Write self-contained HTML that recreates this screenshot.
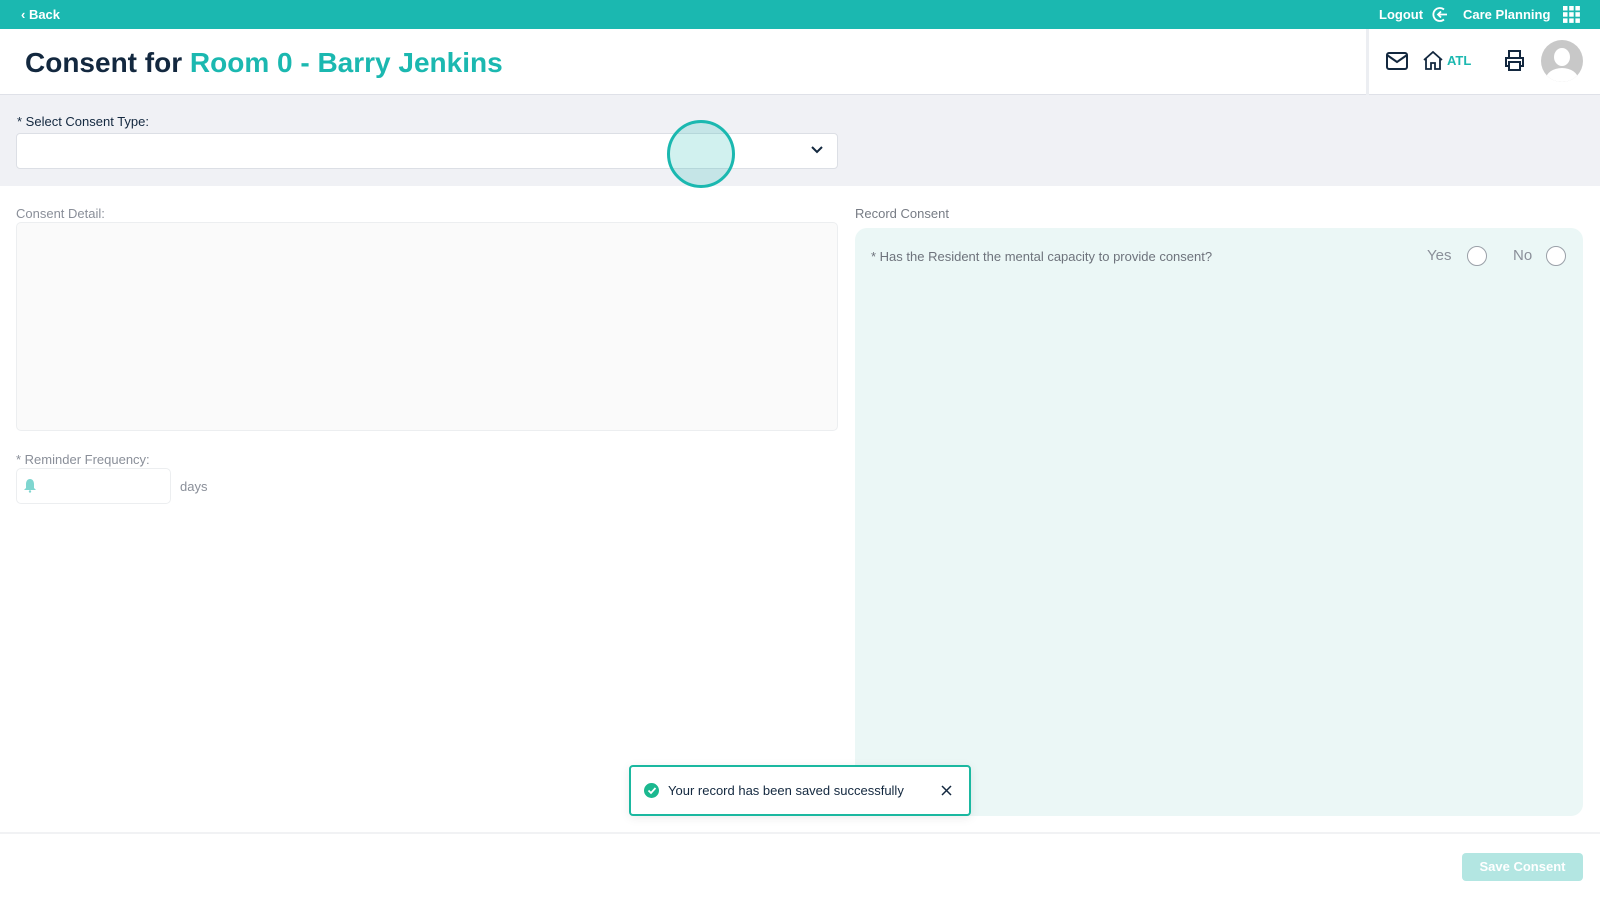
<!DOCTYPE html>
<html><head><meta charset="utf-8"><style>
*{box-sizing:border-box;margin:0;padding:0}
body{width:1600px;height:900px;background:#fff;font-family:"Liberation Sans",sans-serif;position:relative;overflow:hidden}
.abs{position:absolute}
.top{left:0;top:0;width:1600px;height:29px;background:#1bb8b0;color:#fff;font-size:13px;font-weight:bold}
.hdr{left:0;top:29px;width:1600px;height:66px;background:#fff;border-bottom:1px solid #dfe1e8}
.grey{left:0;top:95px;width:1600px;height:91px;background:#f0f1f5}
.lbl{font-size:13px;color:#8a8f99}
</style></head><body>
<div class="abs top">
 <div class="abs" style="left:21px;top:7px">‹ Back</div>
 <div class="abs" style="left:1379px;top:7px">Logout</div>
 <svg class="abs" style="left:1432px;top:6px" width="17" height="17" viewBox="0 0 17 17" fill="none" stroke="#fff" stroke-width="1.8"><path d="M12 3.5A6.5 6.5 0 1 0 12 13.5"/><path d="M15 8.5H6M9 5.5L6 8.5 9 11.5"/></svg>
 <div class="abs" style="left:1463px;top:7px">Care Planning</div>
 <svg class="abs" style="left:1563px;top:6px" width="17" height="17" viewBox="0 0 17 17" fill="#fff"><rect x="0" y="0" width="4.5" height="4.5"/><rect x="6.2" y="0" width="4.5" height="4.5"/><rect x="12.4" y="0" width="4.5" height="4.5"/><rect x="0" y="6.2" width="4.5" height="4.5"/><rect x="6.2" y="6.2" width="4.5" height="4.5"/><rect x="12.4" y="6.2" width="4.5" height="4.5"/><rect x="0" y="12.4" width="4.5" height="4.5"/><rect x="6.2" y="12.4" width="4.5" height="4.5"/><rect x="12.4" y="12.4" width="4.5" height="4.5"/></svg>
</div>
<div class="abs hdr">
 <div class="abs" style="left:25px;top:18px;font-size:28px;font-weight:bold;color:#13283f;white-space:nowrap">Consent for <span style="color:#1bb8b0">Room 0 - Barry Jenkins</span></div>
 <div class="abs" style="left:1366px;top:0;width:3px;height:66px;background:#eceef2"></div>
 <svg class="abs" style="left:1386px;top:23px" width="22" height="18" viewBox="0 0 22 18" fill="none" stroke="#13283f" stroke-width="2"><rect x="1" y="1" width="20" height="16" rx="2"/><path d="M1 3l10 7 10-7"/></svg>
 <svg class="abs" style="left:1423px;top:22px" width="20" height="19" viewBox="0 0 20 19" fill="none" stroke="#13283f" stroke-width="1.8"><path d="M1 9L10 1l9 8M3 7v11h5v-6h4v6h5V7"/></svg>
 <div class="abs" style="left:1447px;top:24px;font-size:13px;font-weight:bold;color:#1bb8b0">ATL</div>
 <svg class="abs" style="left:1504px;top:21px" width="21" height="21" viewBox="0 0 21 21" fill="none" stroke="#13283f" stroke-width="2"><path d="M5 7V1h11v6M5 16H2V8h17v8h-3"/><rect x="5" y="12" width="11" height="8"/></svg>
 <div class="abs" style="left:1541px;top:11px;width:42px;height:42px;border-radius:50%;background:#c8c8c8;overflow:hidden">
  <div class="abs" style="left:13px;top:8px;width:16px;height:18px;border-radius:50%;background:#fff"></div>
  <div class="abs" style="left:5px;top:28px;width:32px;height:22px;border-radius:50%;background:#fff"></div>
 </div>
</div>
<div class="abs grey">
 <div class="abs" style="left:17px;top:19px;font-size:13px;color:#13283f">* Select Consent Type:</div>
 <div class="abs" style="left:16px;top:38px;width:822px;height:36px;background:#fff;border:1px solid #dcdfe5;border-radius:4px"></div>
 <svg class="abs" style="left:811px;top:51px" width="12" height="8" viewBox="0 0 12 8" fill="none" stroke="#13283f" stroke-width="2"><path d="M1 1l5 5 5-5"/></svg>
</div>
<div class="abs" style="left:667px;top:120px;width:68px;height:68px;border-radius:50%;background:rgba(27,184,176,.2);border:3px solid #1bb8b0"></div>
<div class="abs lbl" style="left:16px;top:206px">Consent Detail:</div>
<div class="abs" style="left:16px;top:222px;width:822px;height:209px;background:#fafafa;border:1px solid #eceef0;border-radius:5px"></div>
<div class="abs lbl" style="left:16px;top:452px">* Reminder Frequency:</div>
<div class="abs" style="left:16px;top:468px;width:155px;height:36px;border:1px solid #eceef0;border-radius:5px"></div>
<svg class="abs" style="left:24px;top:479px" width="12" height="14" viewBox="0 0 12 14" fill="#7fd6d0"><path d="M6 0C3 0 2 3 2 5v4L0 11h12l-2-2V5C10 3 9 0 6 0z"/><circle cx="6" cy="12.5" r="1.2"/></svg>
<div class="abs lbl" style="left:180px;top:479px">days</div>
<div class="abs lbl" style="left:855px;top:206px;color:#777c85">Record Consent</div>
<div class="abs" style="left:855px;top:228px;width:728px;height:588px;background:#ebf7f6;border-radius:12px"></div>
<div class="abs lbl" style="left:871px;top:249px;color:#6e737c">* Has the Resident the mental capacity to provide consent?</div>
<div class="abs" style="left:1427px;top:247px;font-size:15px;color:#8a8f99">Yes</div>
<div class="abs" style="left:1467px;top:246px;width:20px;height:20px;border-radius:50%;border:1.5px solid #9aa0a8;background:#fff"></div>
<div class="abs" style="left:1513px;top:247px;font-size:15px;color:#8a8f99">No</div>
<div class="abs" style="left:1546px;top:246px;width:20px;height:20px;border-radius:50%;border:1.5px solid #9aa0a8;background:#fff"></div>
<div class="abs" style="left:0;top:832px;width:1600px;height:2px;background:#f1f2f4"></div>
<div class="abs" style="left:629px;top:765px;width:342px;height:51px;background:#fff;border:2px solid #1bb8a0;border-radius:4px;box-shadow:0 2px 10px rgba(0,0,0,.08)">
 <div class="abs" style="left:13px;top:16px;width:15px;height:15px;border-radius:50%;background:#1bb88f"></div>
 <svg class="abs" style="left:16px;top:19px" width="10" height="9" viewBox="0 0 10 9" fill="none" stroke="#fff" stroke-width="1.8"><path d="M1.5 4.5l2.5 2.5 4.5-5"/></svg>
 <div class="abs" style="left:37px;top:16px;font-size:13px;color:#13283f;white-space:nowrap">Your record has been saved successfully</div>
 <svg class="abs" style="left:310px;top:18px" width="11" height="11" viewBox="0 0 11 11" stroke="#13283f" stroke-width="1.5"><path d="M1 1l9 9M10 1l-9 9"/></svg>
</div>
<div class="abs" style="left:1462px;top:853px;width:121px;height:28px;background:#b3e6e2;border-radius:4px;color:#fff;font-size:13px;font-weight:bold;text-align:center;line-height:28px">Save Consent</div>
</body></html>
